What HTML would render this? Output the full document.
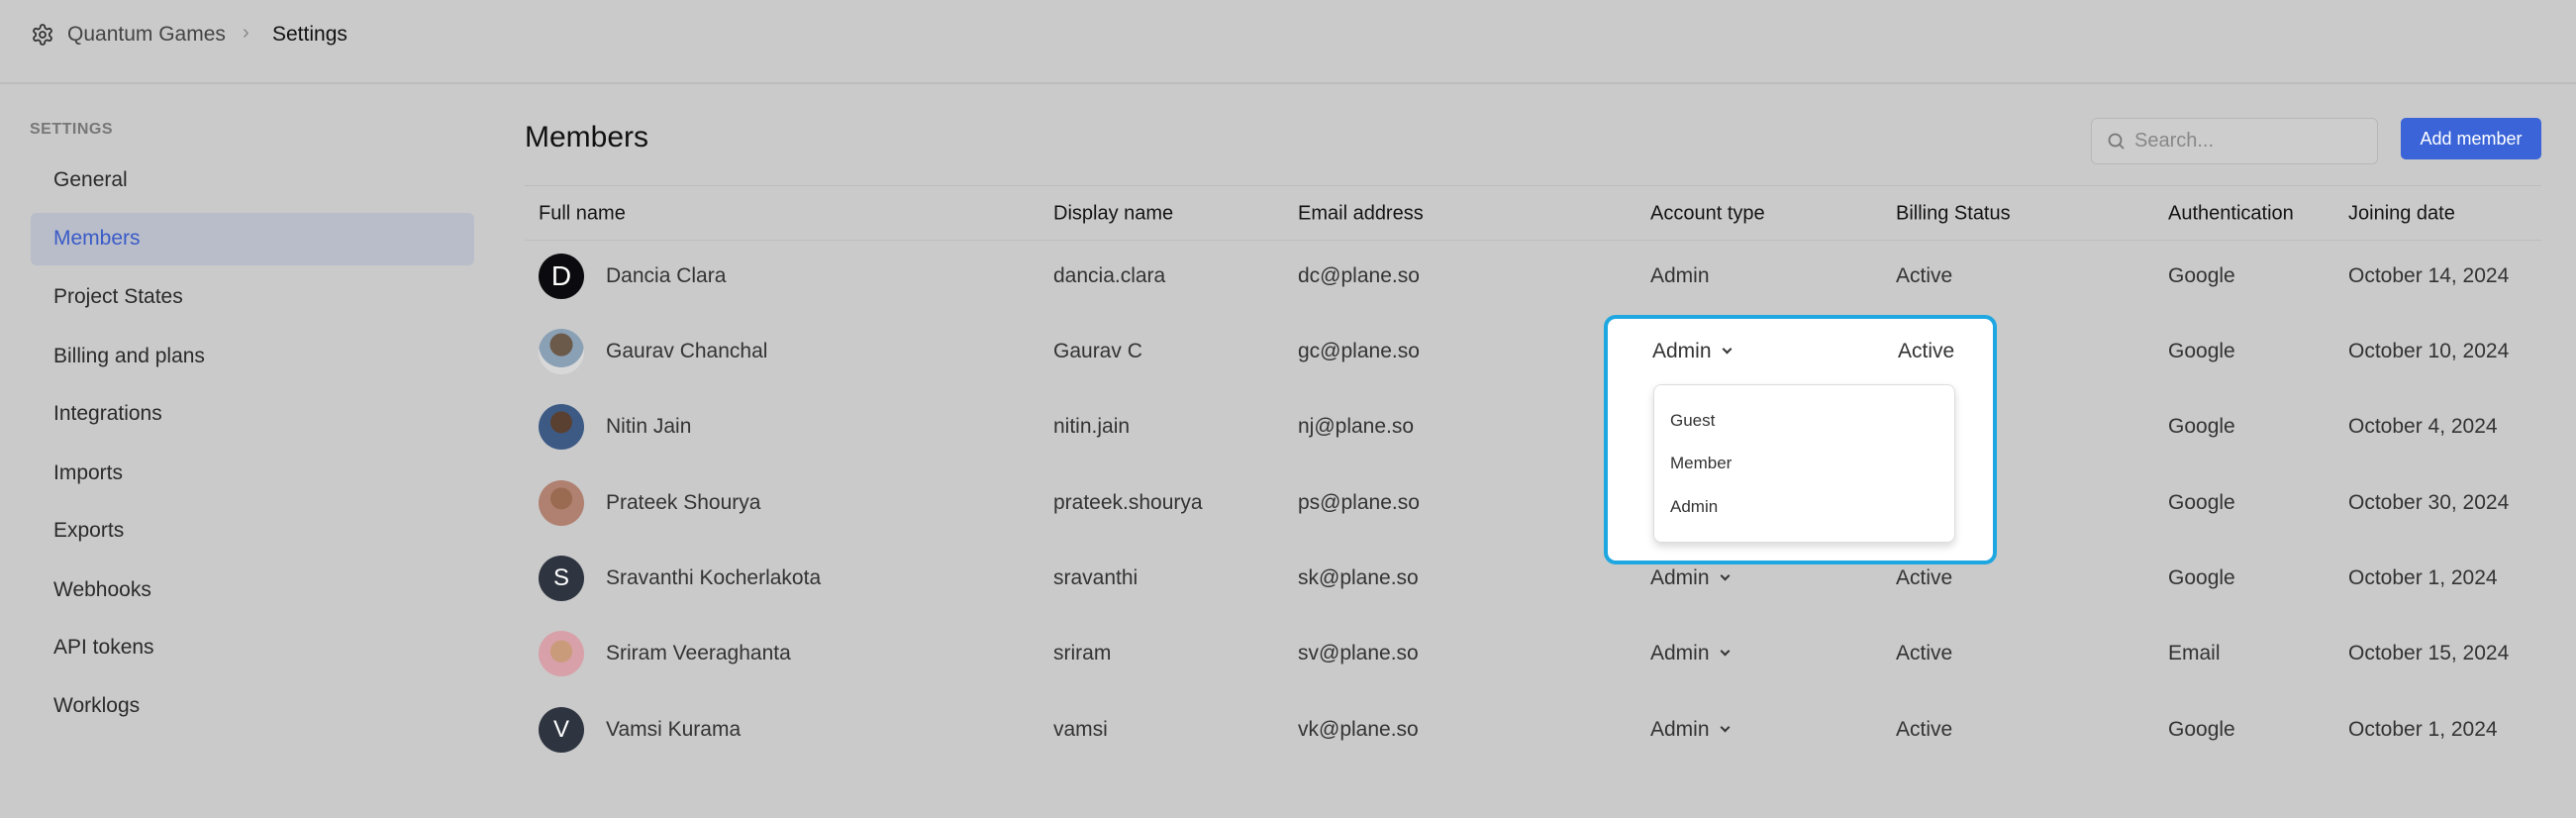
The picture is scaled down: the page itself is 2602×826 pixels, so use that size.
<!DOCTYPE html>
<html><head><meta charset="utf-8"><style>
*{margin:0;padding:0;box-sizing:border-box}
body{width:2602px;height:826px;background:#cacaca;font-family:"Liberation Sans",sans-serif;position:relative;overflow:hidden;color:#2b2b2b}
.a{position:absolute;white-space:nowrap}
.hdr{position:absolute;left:0;top:83px;width:2602px;height:2px;background:#bcbcbc}
.side{font-size:21px;color:#2a2a2a;left:54px;transform:translateY(-50%)}
.th{font-size:20px;color:#141414;transform:translateY(-50%)}
.td{font-size:21px;color:#333;transform:translateY(-50%)}
.av{position:absolute;left:544px;width:46px;height:46px;border-radius:50%;color:#fff;font-size:28px;text-align:center;line-height:46px;transform:translateY(-50%)}
.line{position:absolute;left:530px;width:2037px;height:1px;background:#bdbdbd}
.chev{display:inline-block;width:7px;height:7px;border-right:2px solid #333;border-bottom:2px solid #333;transform:rotate(45deg);margin-left:12px;position:relative;top:-5px}
</style></head><body>
<svg class="a" style="left:31px;top:23px" width="24" height="24" viewBox="0 0 24 24" fill="none" stroke="#333" stroke-width="1.8"><path d="M12.2 2h-.4a2 2 0 0 0-2 2v.2a2 2 0 0 1-1 1.7l-.4.3a2 2 0 0 1-2 0l-.2-.1a2 2 0 0 0-2.7.7l-.2.4a2 2 0 0 0 .7 2.7l.2.1a2 2 0 0 1 1 1.7v.5a2 2 0 0 1-1 1.7l-.2.1a2 2 0 0 0-.7 2.7l.2.4a2 2 0 0 0 2.7.7l.2-.1a2 2 0 0 1 2 0l.4.3a2 2 0 0 1 1 1.7v.2a2 2 0 0 0 2 2h.4a2 2 0 0 0 2-2v-.2a2 2 0 0 1 1-1.7l.4-.3a2 2 0 0 1 2 0l.2.1a2 2 0 0 0 2.7-.7l.2-.4a2 2 0 0 0-.7-2.7l-.2-.1a2 2 0 0 1-1-1.7v-.5a2 2 0 0 1 1-1.7l.2-.1a2 2 0 0 0 .7-2.7l-.2-.4a2 2 0 0 0-2.7-.7l-.2.1a2 2 0 0 1-2 0l-.4-.3a2 2 0 0 1-1-1.7V4a2 2 0 0 0-2-2z"/><circle cx="12" cy="12" r="3"/></svg>
<div class="a" style="left:68px;top:23px;font-size:21px;color:#444">Quantum Games</div>
<div class="a" style="left:245px;top:22px;font-size:20px;color:#888">›</div>
<div class="a" style="left:275px;top:23px;font-size:21px;color:#111">Settings</div>
<div class="hdr"></div>

<div class="a" style="left:30px;top:122px;font-size:16px;color:#777;font-weight:bold;letter-spacing:.5px">SETTINGS</div>
<div class="a" style="left:31px;top:215px;width:448px;height:53px;background:#b9bdca;border-radius:6px"></div>
<div class="a side" style="top:182px">General</div>
<div class="a side" style="top:241px;color:#3a5bc7">Members</div>
<div class="a side" style="top:300px">Project States</div>
<div class="a side" style="top:360px">Billing and plans</div>
<div class="a side" style="top:418px">Integrations</div>
<div class="a side" style="top:478px">Imports</div>
<div class="a side" style="top:536px">Exports</div>
<div class="a side" style="top:596px">Webhooks</div>
<div class="a side" style="top:654px">API tokens</div>
<div class="a side" style="top:713px">Worklogs</div>

<div class="a" style="left:530px;top:122px;font-size:30px;color:#111">Members</div>
<div class="a" style="left:2112px;top:119px;width:290px;height:47px;border:1.5px solid #b8b8b8;border-radius:6px;background:#cdcdcd"></div>
<svg class="a" style="left:2128px;top:133px" width="20" height="20" viewBox="0 0 20 20" fill="none" stroke="#777" stroke-width="1.8"><circle cx="8.5" cy="8.5" r="6"/><path d="M13 13l4 4"/></svg>
<div class="a" style="left:2156px;top:131px;font-size:20px;color:#888">Search...</div>
<div class="a" style="left:2425px;top:119px;width:142px;height:42px;background:#3a64d8;border-radius:5px;color:#fff;font-size:18px;text-align:center;line-height:42px">Add member</div>

<div class="line" style="top:187px"></div>
<div class="line" style="top:242px"></div>
<div class="a th" style="left:544px;top:216px">Full name</div>
<div class="a th" style="left:1064px;top:216px">Display name</div>
<div class="a th" style="left:1311px;top:216px">Email address</div>
<div class="a th" style="left:1667px;top:216px">Account type</div>
<div class="a th" style="left:1915px;top:216px">Billing Status</div>
<div class="a th" style="left:2190px;top:216px">Authentication</div>
<div class="a th" style="left:2372px;top:216px">Joining date</div>

<div class="av" style="top:279px;background:#0b0b0f">D</div>
<div class="av" style="top:355px;background:radial-gradient(circle at 50% 35%,#6b5a4a 0 30%,#8aa0b5 31% 60%,#d8d8d8 61%)"></div>
<div class="av" style="top:431px;background:radial-gradient(circle at 50% 40%,#5a4030 0 30%,#3d5a85 31%)"></div>
<div class="av" style="top:508px;background:radial-gradient(circle at 50% 40%,#9a6b50 0 30%,#b08070 31%)"></div>
<div class="av" style="top:584px;background:#2e3440;font-size:24px">S</div>
<div class="av" style="top:660px;background:radial-gradient(circle at 50% 45%,#c99b7a 0 32%,#d8a0a8 33%)"></div>
<div class="av" style="top:737px;background:#2e3440;font-size:24px">V</div>

<div class="a td" style="left:612px;top:279px">Dancia Clara</div>
<div class="a td" style="left:612px;top:355px">Gaurav Chanchal</div>
<div class="a td" style="left:612px;top:431px">Nitin Jain</div>
<div class="a td" style="left:612px;top:508px">Prateek Shourya</div>
<div class="a td" style="left:612px;top:584px">Sravanthi Kocherlakota</div>
<div class="a td" style="left:612px;top:660px">Sriram Veeraghanta</div>
<div class="a td" style="left:612px;top:737px">Vamsi Kurama</div>

<div class="a td" style="left:1064px;top:279px">dancia.clara</div>
<div class="a td" style="left:1064px;top:355px">Gaurav C</div>
<div class="a td" style="left:1064px;top:431px">nitin.jain</div>
<div class="a td" style="left:1064px;top:508px">prateek.shourya</div>
<div class="a td" style="left:1064px;top:584px">sravanthi</div>
<div class="a td" style="left:1064px;top:660px">sriram</div>
<div class="a td" style="left:1064px;top:737px">vamsi</div>

<div class="a td" style="left:1311px;top:279px">dc@plane.so</div>
<div class="a td" style="left:1311px;top:355px">gc@plane.so</div>
<div class="a td" style="left:1311px;top:431px">nj@plane.so</div>
<div class="a td" style="left:1311px;top:508px">ps@plane.so</div>
<div class="a td" style="left:1311px;top:584px">sk@plane.so</div>
<div class="a td" style="left:1311px;top:660px">sv@plane.so</div>
<div class="a td" style="left:1311px;top:737px">vk@plane.so</div>

<div class="a td" style="left:1667px;top:279px">Admin</div>
<div class="a td" style="left:1667px;top:584px">Admin<span class="chev"></span></div>
<div class="a td" style="left:1667px;top:660px">Admin<span class="chev"></span></div>
<div class="a td" style="left:1667px;top:737px">Admin<span class="chev"></span></div>

<div class="a td" style="left:1915px;top:279px">Active</div>
<div class="a td" style="left:1915px;top:584px">Active</div>
<div class="a td" style="left:1915px;top:660px">Active</div>
<div class="a td" style="left:1915px;top:737px">Active</div>

<div class="a td" style="left:2190px;top:279px">Google</div>
<div class="a td" style="left:2190px;top:355px">Google</div>
<div class="a td" style="left:2190px;top:431px">Google</div>
<div class="a td" style="left:2190px;top:508px">Google</div>
<div class="a td" style="left:2190px;top:584px">Google</div>
<div class="a td" style="left:2190px;top:660px">Email</div>
<div class="a td" style="left:2190px;top:737px">Google</div>

<div class="a td" style="left:2372px;top:279px">October 14, 2024</div>
<div class="a td" style="left:2372px;top:355px">October 10, 2024</div>
<div class="a td" style="left:2372px;top:431px">October 4, 2024</div>
<div class="a td" style="left:2372px;top:508px">October 30, 2024</div>
<div class="a td" style="left:2372px;top:584px">October 1, 2024</div>
<div class="a td" style="left:2372px;top:660px">October 15, 2024</div>
<div class="a td" style="left:2372px;top:737px">October 1, 2024</div>

<div class="a" style="left:1620px;top:318px;width:397px;height:252px;background:#fff;border:4px solid #1ea7e0;border-radius:12px"></div>
<div class="a td" style="left:1669px;top:355px">Admin<span class="chev"></span></div>
<div class="a td" style="left:1917px;top:355px">Active</div>
<div class="a" style="left:1670px;top:388px;width:305px;height:160px;background:#fff;border:1px solid #ddd;border-radius:8px;box-shadow:0 4px 8px rgba(0,0,0,.15)"></div>
<div class="a td" style="left:1687px;top:425px;font-size:17px">Guest</div>
<div class="a td" style="left:1687px;top:468px;font-size:17px">Member</div>
<div class="a td" style="left:1687px;top:512px;font-size:17px">Admin</div>
</body></html>
